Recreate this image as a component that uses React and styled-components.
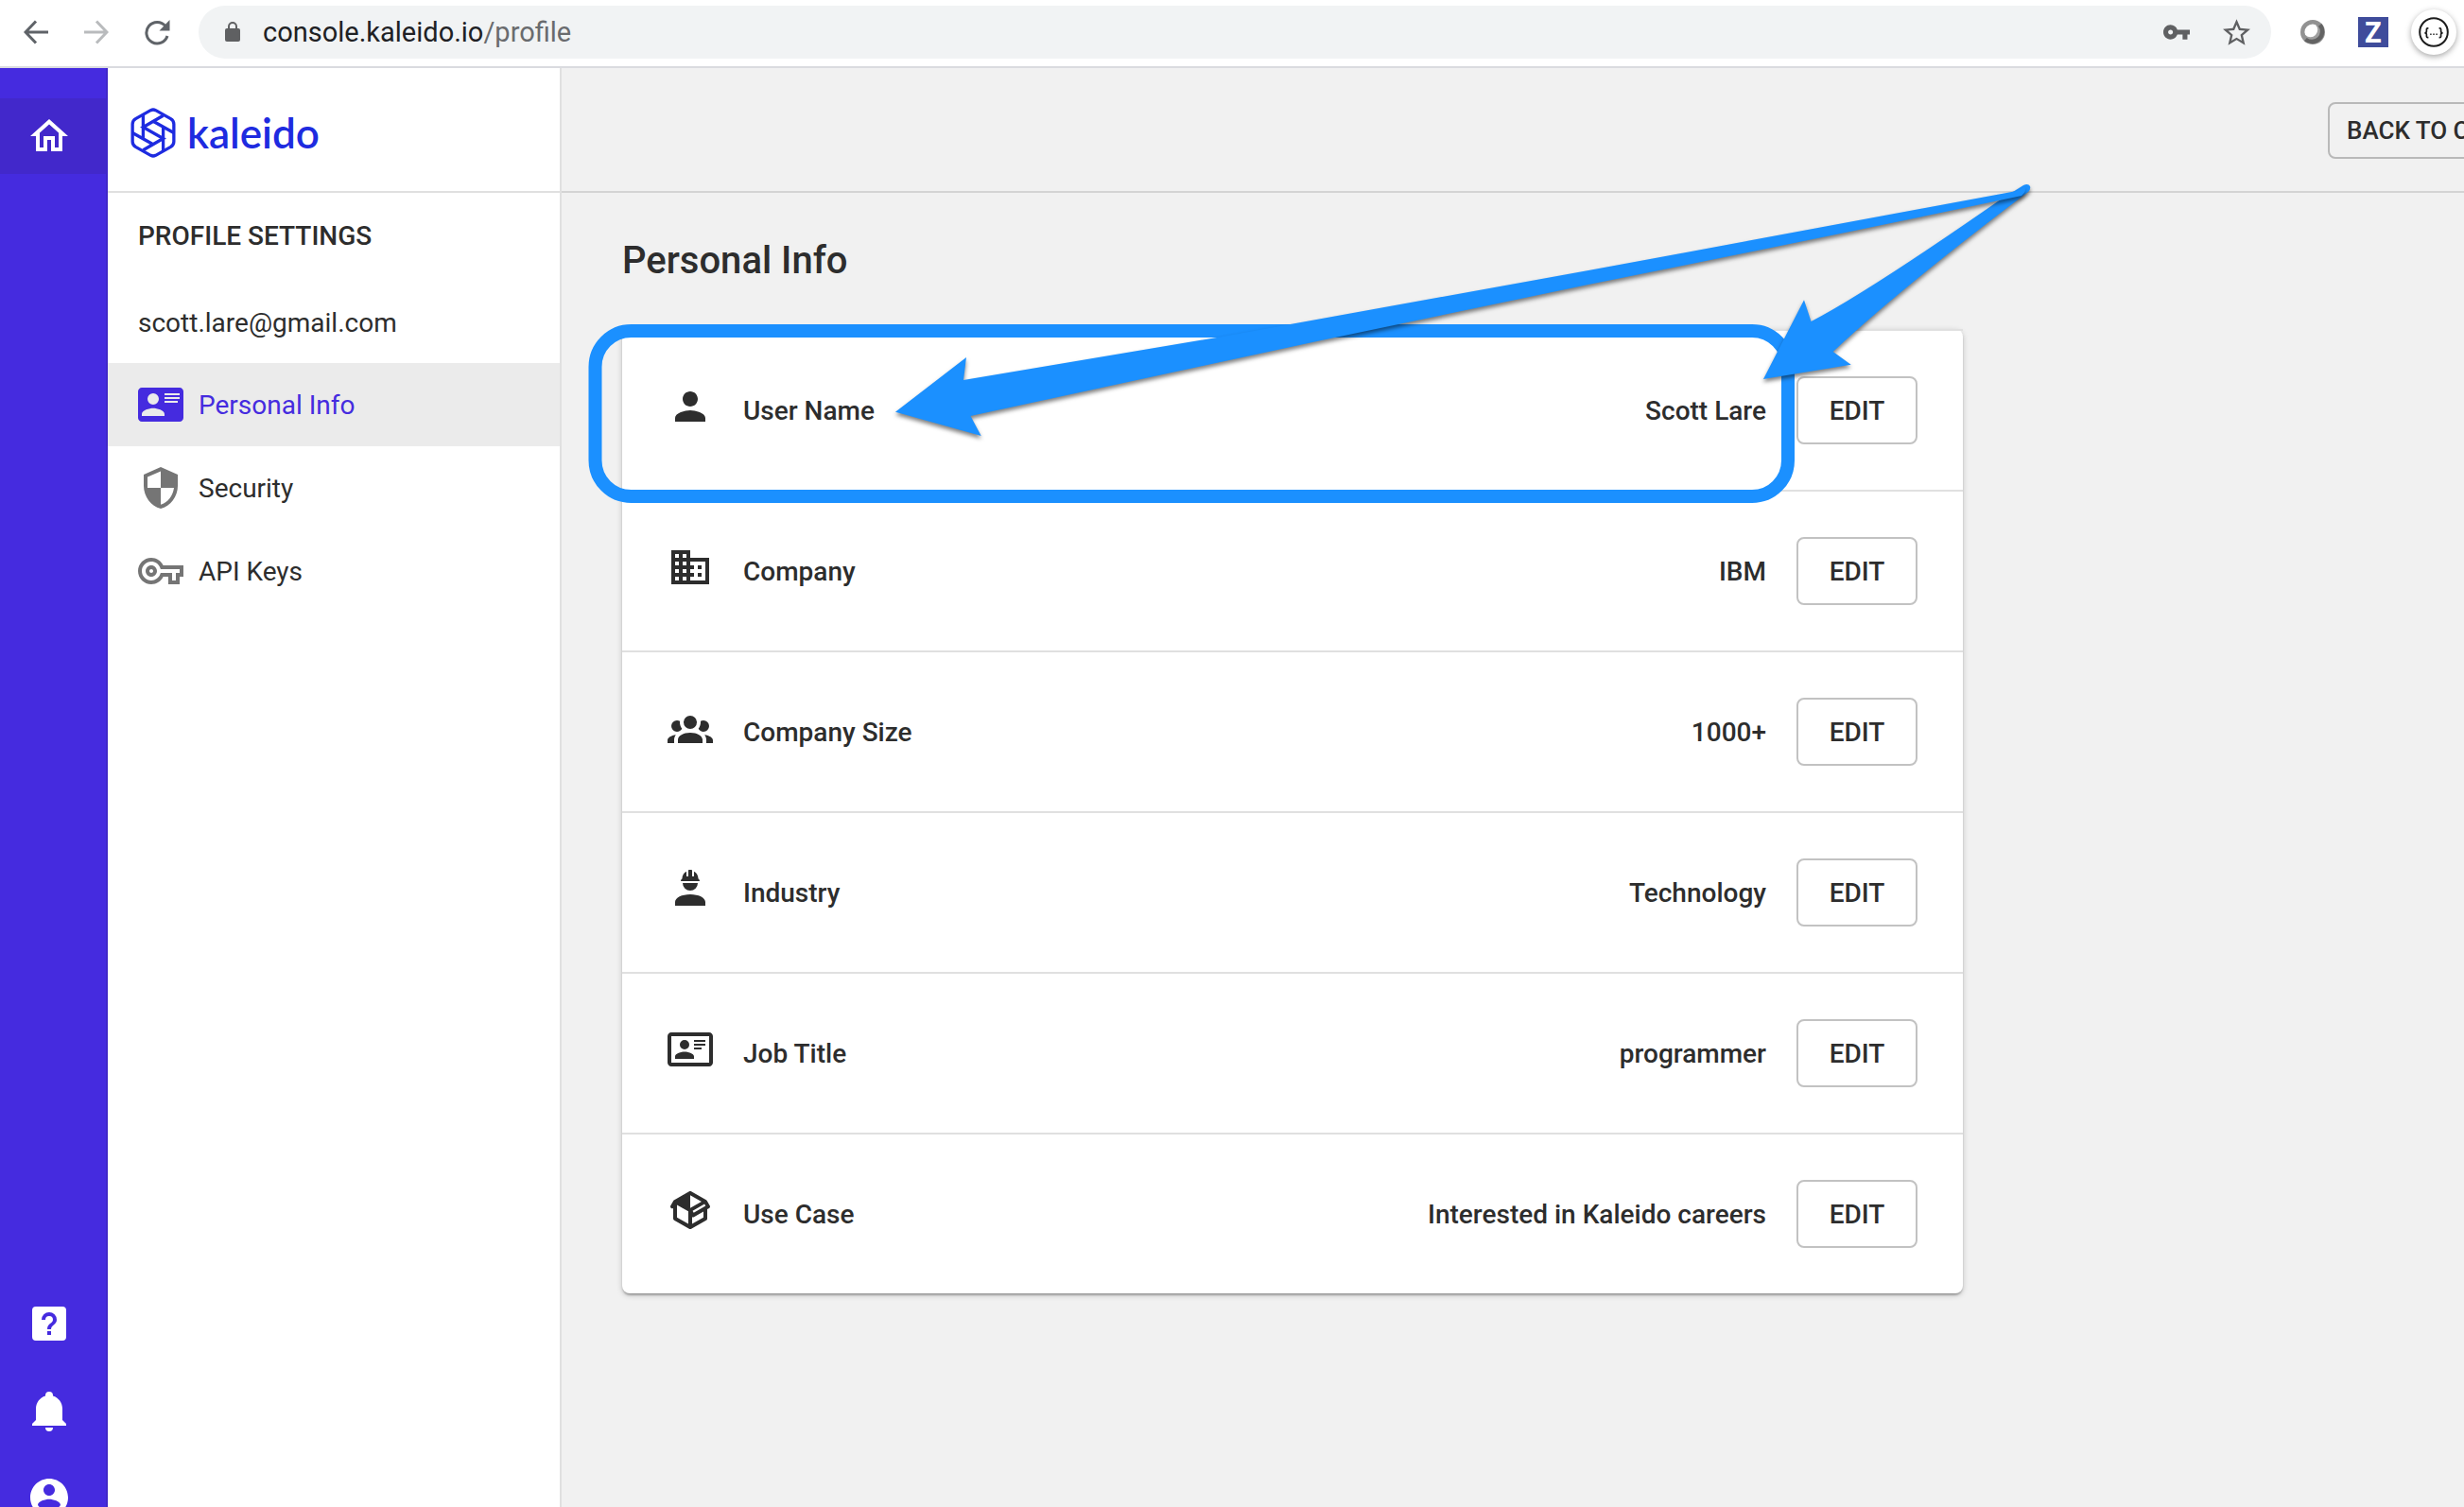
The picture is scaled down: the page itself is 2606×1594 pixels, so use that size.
import React from "react";
import styled, { createGlobalStyle } from "styled-components";

const ink = "#2d2d2d";
const brand = "#452bdf";
const line = "#e0e0e0";
const marker = "#1b90ff";

const GlobalStyle = createGlobalStyle`
  *, *::before, *::after { box-sizing: border-box; }
  html, body, #root { height: 100%; }
  body {
    margin: 0;
    overflow: hidden;
    background: #f1f1f1;
    color: ${ink};
    font-family: Roboto, "Liberation Sans", sans-serif;
    font-size: 28px;
    line-height: 32px;
  }
  button { font: inherit; color: inherit; padding: 0; border: 0; background: none; cursor: pointer; }
  a { color: inherit; text-decoration: none; }
  h1, h2, ul, p { margin: 0; padding: 0; }
  ul { list-style: none; }
  svg { display: block; flex: none; }
`;

const Page = styled.div`
  position: relative;
  display: flex;
  flex-direction: column;
  height: 100%;
  overflow: hidden;
`;

/* ---------- browser bar ---------- */

const Toolbar = styled.header`
  flex: none;
  display: flex;
  align-items: center;
  gap: 20px;
  height: 72px;
  padding: 0 8px 2px 14px;
  background: #fff;
  border-bottom: 2px solid #dadbdf;
`;

const ToolGroup = styled.div`
  display: flex;
  gap: 16px;
`;

const ToolButton = styled.button`
  display: flex;
  align-items: center;
  justify-content: center;
  width: 48px;
  height: 48px;
  border-radius: 50%;
  color: ${(p) => (p.$muted ? "#b9bbbd" : "#5f6368")};
  box-shadow: ${(p) => (p.$raised ? "0 2px 6px rgba(0, 0, 0, 0.35)" : "none")};
`;

const AddressBar = styled.div`
  flex: 1;
  display: flex;
  align-items: center;
  height: 56px;
  padding: 0 22px 0 28px;
  border-radius: 28px;
  background: #f1f3f4;
  color: #5f6062;
`;

const Address = styled.span`
  flex: 1;
  margin-left: 24px;
  color: #696b6e;
  font-size: 29px;
`;

const Host = styled.span`
  color: #202124;
`;

const AddressActions = styled.div`
  display: flex;
  align-items: center;
  gap: 35px;
`;

const ZBadge = styled.span`
  display: flex;
  align-items: center;
  justify-content: center;
  width: 32px;
  height: 32px;
  background: #3f4c9b;
  color: #fff;
  font-family: "Open Sans", sans-serif;
  font-weight: 700;
  font-size: 30px;
  line-height: 32px;
`;

/* ---------- shell ---------- */

const Shell = styled.div`
  flex: 1;
  min-height: 0;
  display: flex;
`;

const Rail = styled.nav`
  flex: none;
  display: flex;
  flex-direction: column;
  justify-content: space-between;
  width: 114px;
  padding-top: 32px;
  background: ${brand};
  border-right: 2px solid #4027c8;
`;

const RailGroup = styled.div`
  display: flex;
  flex-direction: column;
  gap: 12px;
  margin-bottom: ${(p) => (p.$overrun ? "-30px" : "0")};
`;

const RailButton = styled.button`
  display: flex;
  align-items: center;
  height: 80px;
  padding-left: 28px;
  color: #fff;
  background: ${(p) => (p.$active ? "#4228cb" : "transparent")};
`;

const Sidebar = styled.aside`
  flex: none;
  width: 480px;
  background: #fff;
  border-right: 2px solid ${line};
`;

const Brand = styled.a`
  display: flex;
  align-items: center;
  gap: 12px;
  height: 132px;
  padding: 6px 0 0 24px;
  border-bottom: 2px solid ${line};
  color: #1e2be0;
  font-family: Lato, sans-serif;
  font-weight: 600;
  font-size: 44px;
  line-height: 52px;
`;

const SideTitle = styled.h2`
  padding: 30px 32px 0;
  font-size: 28px;
  line-height: 32px;
  font-weight: 500;
`;

const Account = styled.p`
  padding: 60px 32px 26px;
`;

const SideLink = styled.a`
  display: flex;
  align-items: center;
  gap: 16px;
  height: 88px;
  padding: 0 32px;
  background: ${(p) => (p.$active ? "#ebebeb" : "transparent")};
  color: ${(p) => (p.$active ? brand : ink)};

  svg { color: ${(p) => (p.$active ? brand : "#757575")}; }
`;

const SideLabel = styled.span`
  padding-top: 2px;
`;

const Main = styled.main`
  flex: 1;
  min-width: 0;
`;

const TopBar = styled.div`
  display: flex;
  justify-content: flex-end;
  align-items: center;
  height: 132px;
  overflow: hidden;
  border-bottom: 2px solid #d4d4d4;
`;

const OutlineButton = styled.button`
  flex: none;
  border: 2px solid #c2c2c2;
  border-radius: 8px;
  font-weight: 500;
  text-align: center;
  width: 128px;
  height: 72px;
  padding-top: 2px;
`;

const BackButton = styled(OutlineButton)`
  width: 264px;
  height: 60px;
  margin: 2px -120px 0 0;
  padding: 0 0 0 18px;
  border-color: #b9b9b9;
  font-size: 26px;
  text-align: left;
`;

const Content = styled.section`
  padding: 48px 64px;
`;

const Title = styled.h1`
  margin-bottom: 48px;
  font-size: 40px;
  line-height: 48px;
  font-weight: 500;
`;

const Card = styled.ul`
  max-width: 1418px;
  background: #fff;
  border-radius: 8px;
  box-shadow: 0 2px 6px rgba(0, 0, 0, 0.2), 0 2px 2px rgba(0, 0, 0, 0.14),
    0 4px 2px -2px rgba(0, 0, 0, 0.12);
`;

const Row = styled.li`
  display: flex;
  align-items: center;
  gap: 32px;
  height: 170px;
  padding: 0 48px;
  border-top: 2px solid ${line};
  font-weight: 500;
`;

const RowIcon = styled.span`
  padding-bottom: 8px;
`;

const Label = styled.span`
  flex: 1;
  padding-top: 2px;
`;

const Value = styled.span`
  padding-top: 2px;
`;

const Markup = styled.svg`
  position: absolute;
  top: 0;
  left: 0;
  width: 100%;
  height: 100%;
  pointer-events: none;

  path { filter: drop-shadow(0 3px 2px rgba(0, 0, 0, 0.5)); }
`;

/* ---------- icons ---------- */

const paths = {
  home: "M12 5.69l5 4.5V18h-2v-6H9v6H7v-7.81l5-4.5M12 3L2 12h3v8h6v-6h2v6h6v-8h3L12 3z",
  help: "M11,18H13V16H11V18M12,6A4,4 0 0,0 8,10H10A2,2 0 0,1 12,8A2,2 0 0,1 14,10C14,12 11,11.75 11,15H13C13,12.75 16,12.5 16,10A4,4 0 0,0 12,6M5,3H19A2,2 0 0,1 21,5V19A2,2 0 0,1 19,21H5A2,2 0 0,1 3,19V5A2,2 0 0,1 5,3Z",
  bell: "M21,19V20H3V19L5,17V11C5,7.9 7.03,5.17 10,4.29C10,4.19 10,4.1 10,4A2,2 0 0,1 12,2A2,2 0 0,1 14,4C14,4.1 14,4.19 14,4.29C16.97,5.17 19,7.9 19,11V17L21,19M14,21A2,2 0 0,1 12,23A2,2 0 0,1 10,21",
  account: "M12 2C6.48 2 2 6.48 2 12s4.48 10 10 10 10-4.48 10-10S17.52 2 12 2zm0 3c1.66 0 3 1.34 3 3s-1.34 3-3 3-3-1.34-3-3 1.34-3 3-3zm0 14.2c-2.5 0-4.71-1.28-6-3.22.03-1.99 4-3.08 6-3.08 1.99 0 5.97 1.09 6 3.08-1.29 1.94-3.5 3.22-6 3.22z",
  card: "M2,3H22C23.05,3 24,3.95 24,5V19C24,20.05 23.05,21 22,21H2C0.95,21 0,20.05 0,19V5C0,3.95 0.95,3 2,3M14,6V7H22V6H14M14,8V9H21.5L22,9V8H14M14,10V11H21V10H14M8,13.91C6,13.91 2,15 2,17V18H14V17C14,15 10,13.91 8,13.91M8,6A3,3 0 0,0 5,9A3,3 0 0,0 8,12A3,3 0 0,0 11,9A3,3 0 0,0 8,6Z",
  shield: "M12 1L3 5v6c0 5.55 3.84 10.74 9 12 5.16-1.26 9-6.45 9-12V5l-9-4zm0 10.99h7c-.53 4.12-3.28 7.79-7 8.94V12H5V6.3l7-3.11v8.8z",
  keyOutline: "M22 19h-6v-4h-2.68c-1.14 2.42-3.6 4-6.32 4-3.86 0-7-3.14-7-7s3.14-7 7-7c2.72 0 5.17 1.58 6.32 4H24v6h-2v4zm-4-2h2v-4h2v-2H11.94l-.23-.67C11.01 8.34 9.11 7 7 7c-2.76 0-5 2.24-5 5s2.24 5 5 5c2.11 0 4.01-1.34 4.71-3.33l.23-.67H18v4zM7 15c-1.65 0-3-1.35-3-3s1.35-3 3-3 3 1.35 3 3-1.35 3-3 3zm0-4c-.55 0-1 .45-1 1s.45 1 1 1 1-.45 1-1-.45-1-1-1z",
  person: "M12 12c2.21 0 4-1.79 4-4s-1.79-4-4-4-4 1.79-4 4 1.79 4 4 4zm0 2c-2.67 0-8 1.34-8 4v2h16v-2c0-2.66-5.33-4-8-4z",
  building: "M12 7V3H2v18h20V7H12zM6 19H4v-2h2v2zm0-4H4v-2h2v2zm0-4H4V9h2v2zm0-4H4V5h2v2zm4 12H8v-2h2v2zm0-4H8v-2h2v2zm0-4H8V9h2v2zm0-4H8V5h2v2zm10 12h-8v-2h2v-2h-2v-2h2v-2h-2V9h8v10zm-2-8h-2v2h2v-2zm0 4h-2v2h2v-2z",
  group: "M12,5.5A3.5,3.5 0 0,1 15.5,9A3.5,3.5 0 0,1 12,12.5A3.5,3.5 0 0,1 8.5,9A3.5,3.5 0 0,1 12,5.5M5,8C5.56,8 6.08,8.15 6.53,8.42C6.38,9.85 6.8,11.27 7.66,12.38C7.16,13.34 6.16,14 5,14A3,3 0 0,1 2,11A3,3 0 0,1 5,8M19,8A3,3 0 0,1 22,11A3,3 0 0,1 19,14C17.84,14 16.84,13.34 16.34,12.38C17.2,11.27 17.62,9.85 17.47,8.42C17.92,8.15 18.44,8 19,8M5.5,18.25C5.5,16.18 8.41,14.5 12,14.5C15.59,14.5 18.5,16.18 18.5,18.25V20H5.5V18.25M0,20V18.5C0,17.11 1.89,15.94 4.45,15.6C3.86,16.28 3.5,17.22 3.5,18.25V20H0M24,20H20.5V18.25C20.5,17.22 20.14,16.28 19.55,15.6C22.11,15.94 24,17.11 24,18.5V20Z",
  worker: "M12,15C7.58,15 4,16.79 4,19V21H20V19C20,16.79 16.42,15 12,15M8,9A4,4 0 0,0 12,13A4,4 0 0,0 16,9M11.5,2C11.2,2 11,2.21 11,2.5V5.5H10V3C10,3 7.75,3.86 7.75,6.75C7.75,6.75 7,6.89 7,8H17C16.95,6.89 16.25,6.75 16.25,6.75C16.25,3.86 14,3 14,3V5.5H13V2.5C13,2.21 12.81,2 12.5,2H11.5Z",
  cardOutline: "M22,3H2C0.91,3.04 0.04,3.91 0,5V19C0.04,20.09 0.91,20.96 2,21H22C23.09,20.96 23.96,20.09 24,19V5C23.96,3.91 23.09,3.04 22,3M22,19H2V5H22V19M14,17V15.75C14,14.09 10.66,13.25 9,13.25C7.34,13.25 4,14.09 4,15.75V17H14M9,7A2.5,2.5 0 0,0 6.5,9.5A2.5,2.5 0 0,0 9,12A2.5,2.5 0 0,0 11.5,9.5A2.5,2.5 0 0,0 9,7M14,7V8H20V7H14M14,9V10H20V9H14M14,11V12H18V11H14",
  box: "M2,10.96C1.5,10.68 1.35,10.07 1.63,9.59L3.13,7C3.24,6.8 3.41,6.66 3.6,6.58L11.43,2.18C11.59,2.06 11.79,2 12,2C12.21,2 12.41,2.06 12.57,2.18L20.47,6.62C20.66,6.72 20.82,6.88 20.91,7.08L22.36,9.6C22.64,10.08 22.47,10.69 22,10.96L21,11.54V16.5C21,16.88 20.79,17.21 20.47,17.38L12.57,21.82C12.41,21.94 12.21,22 12,22C11.79,22 11.59,21.94 11.43,21.82L3.53,17.38C3.21,17.21 3,16.88 3,16.5V10.96C2.7,11.13 2.32,11.14 2,10.96M12,4.15V4.15L12,10.85V10.85L17.96,7.5L12,4.15M5,15.91L11,19.29V12.58L5,9.21V15.91M19,15.91V12.69L14,15.59C13.67,15.77 13.3,15.76 13,15.6V19.29L19,15.91M13.85,13.36L20.13,9.73L19.55,8.72L13.27,12.35L13.85,13.36Z",
};

function Icon({ name }) {
  return (
    <svg width="48" height="48" viewBox="0 0 24 24" fill="currentColor" fillRule="evenodd" aria-hidden="true">
      <path d={paths[name]} />
    </svg>
  );
}

const ArrowIcon = ({ forward }) => (
  <svg width="26" height="26" viewBox="0 0 26 26" fill="none" stroke="currentColor" strokeWidth="3" aria-hidden="true">
    <path d={forward ? "M0 13H24M13 1.5L24 13L13 24.5" : "M26 13H2M13 1.5L2 13L13 24.5"} />
  </svg>
);

const ReloadIcon = () => (
  <svg width="28" height="28" viewBox="0 0 28 28" fill="none" aria-hidden="true">
    <path d="M23 7.6A11.3 11.3 0 1 0 25 18" stroke="currentColor" strokeWidth="3" />
    <path d="M27.5 1V12.5H16.5Z" fill="currentColor" />
  </svg>
);

const LockIcon = () => (
  <svg width="16" height="22" viewBox="0 0 16 22" aria-hidden="true">
    <path d="M4 8V5a4 4 0 0 1 8 0v3" fill="none" stroke="currentColor" strokeWidth="2" />
    <rect y="7" width="16" height="14" rx="2" fill="currentColor" />
  </svg>
);

const KeyIcon = () => (
  <svg width="28" height="16" viewBox="1 6 22 12" fill="currentColor" aria-hidden="true">
    <path d="M12.65 10C11.83 7.67 9.61 6 7 6c-3.31 0-6 2.69-6 6s2.69 6 6 6c2.61 0 4.83-1.67 5.65-4H17v4h4v-4h2v-4H12.65zM7 14c-1.1 0-2-.9-2-2s.9-2 2-2 2 .9 2 2-.9 2-2 2z" />
  </svg>
);

const StarIcon = () => (
  <svg width="29" height="28" viewBox="2 2 20 19" fill="currentColor" aria-hidden="true">
    <path d="M22 9.24l-7.19-.62L12 2 9.19 8.63 2 9.24l5.46 4.73L5.82 21 12 17.27 18.18 21l-1.63-7.03L22 9.24zM12 15.4l-3.76 2.27 1-4.28-3.32-2.88 4.38-.38L12 6.1l1.71 4.04 4.38.38-3.32 2.88 1 4.28L12 15.4z" />
  </svg>
);

const OrbIcon = () => (
  <svg width="28" height="28" viewBox="0 0 28 28" aria-hidden="true">
    <circle cx="14" cy="14" r="10.5" fill="#a0a0a0" />
    <circle cx="11.6" cy="11.6" r="7.6" fill="#fff" />
    <circle cx="14" cy="14" r="10.8" fill="none" stroke="#929292" strokeWidth="4.4" />
    <path d="M21.6 6.4A10.8 10.8 0 0 1 6.4 21.6" fill="none" stroke="#636363" strokeWidth="4.4" />
  </svg>
);

const BracesIcon = () => (
  <svg width="32" height="32" viewBox="0 0 32 32" fill="none" stroke="#1c1c1c" aria-hidden="true">
    <circle cx="16" cy="16" r="14.8" strokeWidth="2" />
    <path d="M10.4 11.8H9.6Q8.4 11.800 8.4 13V15Q8.4 16.800 6.400 16.800Q8.400 16.800 8.400 18.600V20.400Q8.400 21.700 9.600 21.700H10.400" strokeWidth="1.7" />
    <path d="M21.6 11.8H22.4Q23.6 11.800 23.6 13V15Q23.6 16.800 25.600 16.800Q23.600 16.800 23.600 18.600V20.400Q23.600 21.700 22.400 21.700H21.600" strokeWidth="1.7" />
    <path d="M12.200 18.200h1.400M15.300 18.200h1.400M18.400 18.200h1.400" strokeWidth="1.400" />
  </svg>
);

const LogoMark = () => (
  <svg width="48" height="53" viewBox="86 72 144 160" fill="none" stroke="currentColor" strokeWidth="10" aria-hidden="true">
    <path d="M150 80Q158 76 166 80L214 107Q224 113 224 124V180Q224 191 214 197L166 224Q158 228 150 224L102 197Q92 191 92 180V124Q92 113 102 107Z" />
    <path d="M126 95V172M190 209V132M190 97L126 134L190 170L126 207M158 115L224 152M158 189L92 152" />
  </svg>
);

/* ---------- data ---------- */

const details = [
  ["person", "User Name", "Scott Lare"],
  ["building", "Company", "IBM"],
  ["group", "Company Size", "1000+"],
  ["worker", "Industry", "Technology"],
  ["cardOutline", "Job Title", "programmer"],
  ["box", "Use Case", "Interested in Kaleido careers"],
];

const sections = [
  ["card", "Personal Info"],
  ["shield", "Security"],
  ["keyOutline", "API Keys"],
];

export default function App() {
  return (
    <Page>
      <GlobalStyle />
      <Toolbar>
        <ToolGroup>
          <ToolButton aria-label="Back"><ArrowIcon /></ToolButton>
          <ToolButton aria-label="Forward" $muted><ArrowIcon forward /></ToolButton>
          <ToolButton aria-label="Reload"><ReloadIcon /></ToolButton>
        </ToolGroup>
        <AddressBar>
          <LockIcon />
          <Address><Host>console.kaleido.io</Host>/profile</Address>
          <AddressActions>
            <KeyIcon />
            <StarIcon />
          </AddressActions>
        </AddressBar>
        <ToolGroup>
          <ToolButton aria-label="Orb extension"><OrbIcon /></ToolButton>
          <ToolButton aria-label="Z extension"><ZBadge>Z</ZBadge></ToolButton>
          <ToolButton aria-label="JSON extension" $raised><BracesIcon /></ToolButton>
        </ToolGroup>
      </Toolbar>

      <Shell>
        <Rail>
          <RailGroup>
            <RailButton aria-label="Home" $active><Icon name="home" /></RailButton>
          </RailGroup>
          <RailGroup $overrun>
            <RailButton aria-label="Help"><Icon name="help" /></RailButton>
            <RailButton aria-label="Notifications"><Icon name="bell" /></RailButton>
            <RailButton aria-label="Account"><Icon name="account" /></RailButton>
          </RailGroup>
        </Rail>

        <Sidebar>
          <Brand href="#home"><LogoMark />kaleido</Brand>
          <SideTitle>PROFILE SETTINGS</SideTitle>
          <Account>scott.lare@gmail.com</Account>
          <nav>
            {sections.map(([icon, label], i) => (
              <SideLink key={label} href={`#${icon}`} $active={i === 0}>
                <Icon name={icon} />
                <SideLabel>{label}</SideLabel>
              </SideLink>
            ))}
          </nav>
        </Sidebar>

        <Main>
          <TopBar>
            <BackButton>BACK TO C</BackButton>
          </TopBar>
          <Content>
            <Title>Personal Info</Title>
            <Card>
              {details.map(([icon, label, value]) => (
                <Row key={label}>
                  <RowIcon><Icon name={icon} /></RowIcon>
                  <Label>{label}</Label>
                  <Value>{value}</Value>
                  <OutlineButton aria-label={`Edit ${label}`}>EDIT</OutlineButton>
                </Row>
              ))}
            </Card>
          </Content>
        </Main>
      </Shell>

      <Markup aria-hidden="true" fill={marker}>
        <rect x="629.5" y="350" width="1261.5" height="175" rx="38" fill="none" stroke={marker} strokeWidth="14" />
        <path d="M1865 401L1908 317.3L1915.5 340Q1975 309 2113 213L2140 196Q2145 193.500 2147 197Q2148 200 2145 203Q2010 305 1938.700 372L1957.700 385.700Z" />
        <path d="M947 435.700L1022 378L1019 402L1290 356.500L1680 286L2133 202L2141 198Q2144 202 2138 207Q1960 245 1680 301L1400 359.500L1026.500 440L1037.700 461Z" />
      </Markup>
    </Page>
  );
}
